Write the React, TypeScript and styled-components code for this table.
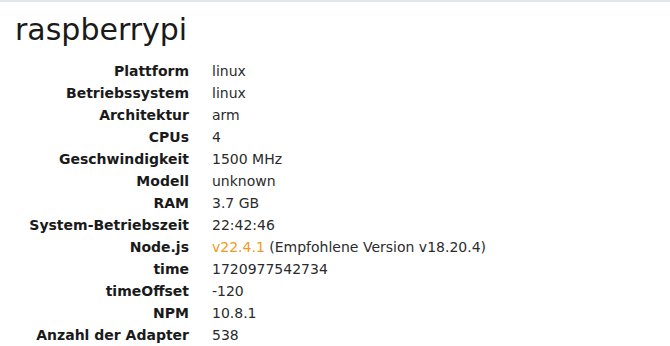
import React from "react";
import styled, { createGlobalStyle } from "styled-components";

const GlobalStyle = createGlobalStyle`
  html, body {
    margin: 0;
    padding: 0;
    background: #ffffff;
  }
  body {
    font-family: "DejaVu Sans", "Liberation Sans", sans-serif;
  }
`;

const Page = styled.div`
  width: 670px;
  min-height: 346px;
  border-top: 2px solid #e3e7eb;
  box-sizing: border-box;
`;

const Content = styled.div`
  padding: 10px 0 0 15px;
`;

const Title = styled.h1`
  margin: 0 0 12px 0;
  font-size: 30px;
  line-height: 36px;
  font-weight: normal;
  color: #1a1a1a;
`;

const InfoGrid = styled.dl`
  margin: 0;
  display: grid;
  grid-template-columns: 174px auto;
  column-gap: 23px;
  grid-auto-rows: 22px;
  align-items: center;
`;

const Label = styled.dt`
  margin: 0;
  text-align: right;
  font-size: 14px;
  line-height: 22px;
  font-weight: bold;
  color: #1a1a1a;
  white-space: nowrap;
`;

const Value = styled.dd`
  margin: 0;
  font-size: 14px;
  line-height: 22px;
  color: #2b2b2b;
  white-space: nowrap;
`;

const Version = styled.span<{ $outdated?: boolean }>`
  color: ${(p) => (p.$outdated ? "#f39a1e" : "inherit")};
`;

type Row = { label: string; value: React.ReactNode };

const rows: Row[] = [
  { label: "Plattform", value: "linux" },
  { label: "Betriebssystem", value: "linux" },
  { label: "Architektur", value: "arm" },
  { label: "CPUs", value: "4" },
  { label: "Geschwindigkeit", value: "1500 MHz" },
  { label: "Modell", value: "unknown" },
  { label: "RAM", value: "3.7 GB" },
  { label: "System-Betriebszeit", value: "22:42:46" },
  {
    label: "Node.js",
    value: (
      <>
        <Version $outdated>v22.4.1</Version> (Empfohlene Version v18.20.4)
      </>
    ),
  },
  { label: "time", value: "1720977542734" },
  { label: "timeOffset", value: "-120" },
  { label: "NPM", value: "10.8.1" },
  { label: "Anzahl der Adapter", value: "538" },
];

export default function App() {
  return (
    <>
      <GlobalStyle />
      <Page>
        <Content>
          <Title>raspberrypi</Title>
          <InfoGrid>
            {rows.map((r) => (
              <React.Fragment key={r.label}>
                <Label>{r.label}</Label>
                <Value>{r.value}</Value>
              </React.Fragment>
            ))}
          </InfoGrid>
        </Content>
      </Page>
    </>
  );
}
